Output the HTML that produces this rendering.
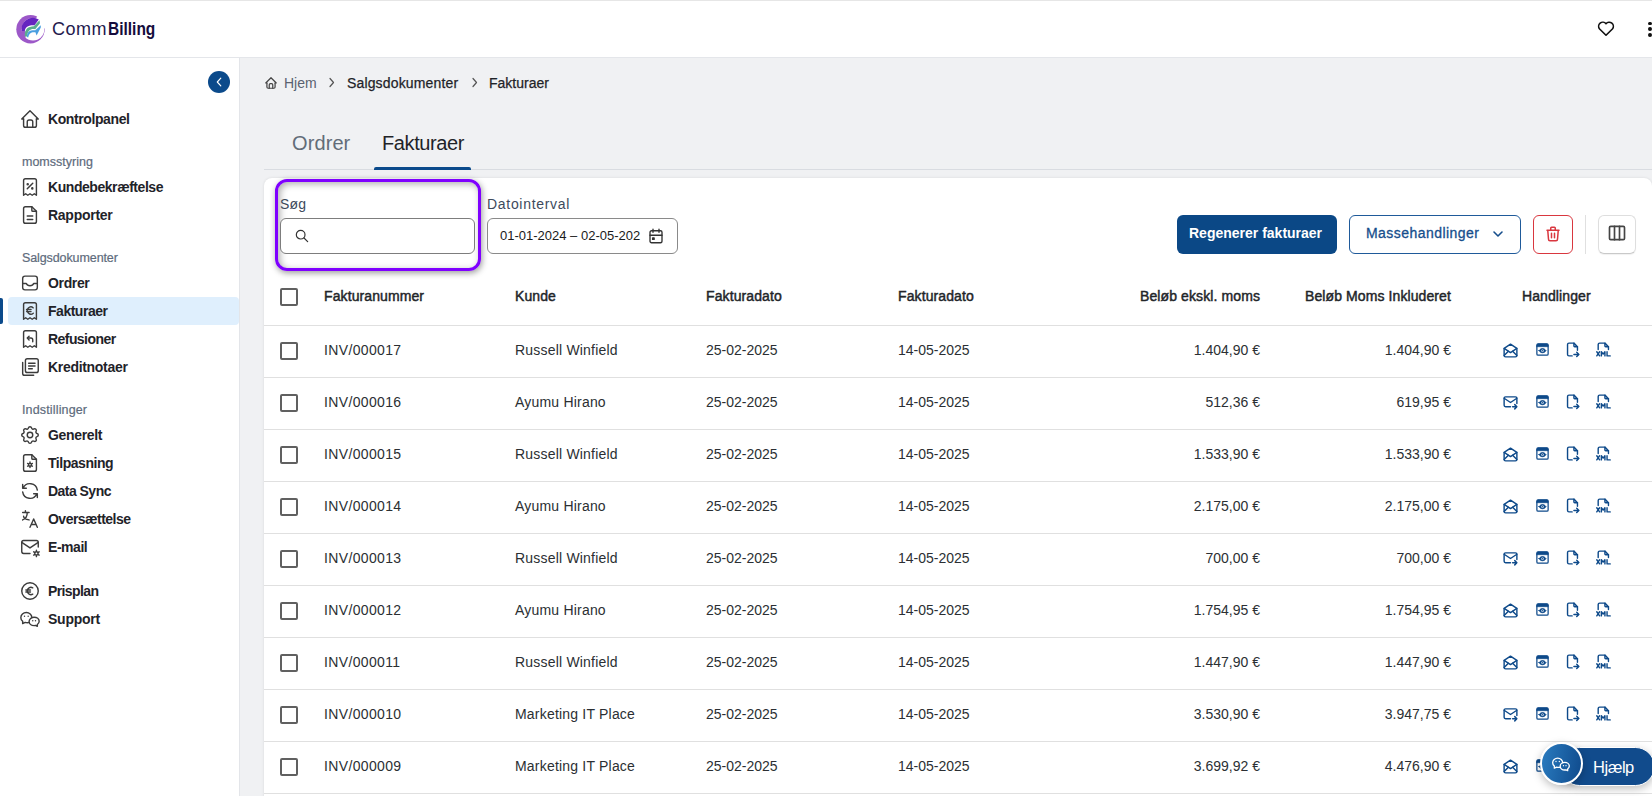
<!DOCTYPE html>
<html><head><meta charset="utf-8">
<style>
*{box-sizing:border-box;margin:0;padding:0}
html,body{width:1652px;height:796px;overflow:hidden;background:#f0f1f3;font-family:"Liberation Sans",sans-serif;color:#1f2328}
.abs{position:absolute;display:block}
.t{position:absolute;white-space:nowrap}
</style></head><body>
<div class="abs" style="left:0;top:0;width:1652px;height:58px;background:#fff;border-top:1px solid #e6e6e6;border-bottom:1px solid #e4e6ea"></div>
<svg class="abs" style="left:13px;top:12px" width="34" height="34" viewBox="0 0 34 34">
<circle cx="17.5" cy="17.2" r="14.2" fill="#9c58c8"/>
<circle cx="20" cy="17.3" r="11.3" fill="#fff"/>
<path d="M17.5 17.2 L25.4 2 L34 2 L34 16.2 Z" fill="#fff"/>
<path d="M8.5 19 L12.5 19 L12.5 26.5 L8.5 26.5 Z" fill="#9c58c8"/>
<path d="M8.8 19 A11.3 11.3 0 0 1 25.8 7.5 L21.5 13.2 C17 12.8 12.5 14 11.8 19 Z" fill="#6524c0"/>
<path d="M11.8 24.5 C11.5 17 15 14.5 20.8 14.3 L26.5 8.3 L27 11.3 L22.2 17.2 C17.5 16.5 14.6 18.5 14 24.5 Z" fill="#5bae8e"/>
<path d="M14 25 C13.8 20 16 18.2 22.3 18.3 L27.8 13.2 L27.8 15.5 L23.6 23.5 L22.4 20.2 C18 19.8 16.2 21 15.2 25.5 Z" fill="#4a9fe0"/>
</svg>
<div class="t" style="left:52px;top:18px;font-size:18px;color:#150c3c;font-weight:normal;letter-spacing:0px;line-height:22px;"><span style="font-weight:normal;letter-spacing:0.5px;color:#241a4d">Comm</span><b style="display:inline-block;transform:scaleX(0.86);transform-origin:0 0;margin-left:1px">Billing</b></div>
<svg class="abs" style="left:1597px;top:20px" width="18" height="17" viewBox="0 0 24 22" fill="none" stroke="#111" stroke-width="2.2" stroke-linecap="round" stroke-linejoin="round" ><path d="M12 20 L3.5 11.7 A5 5 0 0 1 12 4.6 A5 5 0 0 1 20.5 11.7 Z"/></svg>
<div class="abs" style="left:1648px;top:21.5px;width:3.8px;height:3.8px;border-radius:50%;background:#111"></div>
<div class="abs" style="left:1648px;top:27.200000000000003px;width:3.8px;height:3.8px;border-radius:50%;background:#111"></div>
<div class="abs" style="left:1648px;top:32.9px;width:3.8px;height:3.8px;border-radius:50%;background:#111"></div>
<div class="abs" style="left:0;top:58px;width:240px;height:738px;background:#fff;border-right:1px solid #e3e5e9"></div>
<div class="abs" style="left:208px;top:71px;width:22px;height:22px;border-radius:50%;background:#0b4a8b"></div>
<svg class="abs" style="left:214px;top:76px" width="10" height="12" viewBox="0 0 10 12" fill="none" stroke="#fff" stroke-width="1.15" stroke-linecap="round" stroke-linejoin="round" ><path d="M6.8 2.2 L3.3 6 L6.8 9.8"/></svg>
<div class="t" style="left:48px;top:109px;font-size:14px;color:#1f2329;font-weight:bold;letter-spacing:-0.4px;line-height:20px;">Kontrolpanel</div>
<svg class="abs" style="left:19px;top:108px" width="22" height="22" viewBox="0 0 24 24" fill="none" stroke="#3c3c3c" stroke-width="1.55" stroke-linecap="round" stroke-linejoin="round" ><path d="M5 12H3l9-9 9 9h-2"/><path d="M5 12v7a2 2 0 0 0 2 2h10a2 2 0 0 0 2-2v-7"/><path d="M9 21v-6a2 2 0 0 1 2-2h2a2 2 0 0 1 2 2v6"/></svg>
<div class="t" style="left:22px;top:154px;font-size:12.5px;color:#5e6b7c;font-weight:normal;letter-spacing:0px;line-height:16px;-webkit-text-stroke:0.2px #5e6b7c">momsstyring</div>
<div class="t" style="left:48px;top:177px;font-size:14px;color:#1f2329;font-weight:bold;letter-spacing:-0.444px;line-height:20px;">Kundebekræftelse</div>
<svg class="abs" style="left:19px;top:176px" width="22" height="22" viewBox="0 0 24 24" fill="none" stroke="#3c3c3c" stroke-width="1.55" stroke-linecap="round" stroke-linejoin="round" ><path d="M5 21V5a2 2 0 0 1 2-2h10a2 2 0 0 1 2 2v16l-2.3-1.6-2.3 1.6-2.4-1.6-2.4 1.6-2.3-1.6z"/><path d="M9 14l6-6"/><circle cx="9.5" cy="9" r=".6" fill="#333"/><circle cx="14.5" cy="13.5" r=".6" fill="#333"/></svg>
<div class="t" style="left:48px;top:205px;font-size:14px;color:#1f2329;font-weight:bold;letter-spacing:-0.267px;line-height:20px;">Rapporter</div>
<svg class="abs" style="left:19px;top:204px" width="22" height="22" viewBox="0 0 24 24" fill="none" stroke="#3c3c3c" stroke-width="1.55" stroke-linecap="round" stroke-linejoin="round" ><path d="M14 3v4a1 1 0 0 0 1 1h4"/><path d="M17 21H7a2 2 0 0 1-2-2V5a2 2 0 0 1 2-2h7l5 5v11a2 2 0 0 1-2 2z"/><path d="M9 13h6M9 17h6"/></svg>
<div class="t" style="left:22px;top:250px;font-size:12.5px;color:#5e6b7c;font-weight:normal;letter-spacing:-0.1px;line-height:16px;-webkit-text-stroke:0.2px #5e6b7c">Salgsdokumenter</div>
<div class="abs" style="left:8px;top:297px;width:231px;height:28px;background:#dfeffd;border-radius:4px"></div>
<div class="abs" style="left:0;top:298px;width:3px;height:26px;background:#0b4a8b;border-radius:0 2px 2px 0"></div>
<div class="t" style="left:48px;top:273px;font-size:14px;color:#1f2329;font-weight:bold;letter-spacing:-0.35px;line-height:20px;">Ordrer</div>
<svg class="abs" style="left:19px;top:272px" width="22" height="22" viewBox="0 0 24 24" fill="none" stroke="#3c3c3c" stroke-width="1.55" stroke-linecap="round" stroke-linejoin="round" ><rect x="4" y="4.5" width="16" height="15" rx="2.5"/><path d="M4 12.5h4c.6 1.6 2 2.5 4 2.5s3.4-.9 4-2.5h4"/></svg>
<div class="t" style="left:48px;top:301px;font-size:14px;color:#1f2329;font-weight:bold;letter-spacing:-0.478px;line-height:20px;">Fakturaer</div>
<svg class="abs" style="left:19px;top:300px" width="22" height="22" viewBox="0 0 24 24" fill="none" stroke="#3c3c3c" stroke-width="1.55" stroke-linecap="round" stroke-linejoin="round" ><path d="M5 21V5a2 2 0 0 1 2-2h10a2 2 0 0 1 2 2v16l-2.3-1.6-2.3 1.6-2.4-1.6-2.4 1.6-2.3-1.6z"/><path d="M15.6 8.6a3.9 3.9 0 1 0 0 5.8M8.2 10.4h5M8.2 12.6h5" stroke-width="1.45"/></svg>
<div class="t" style="left:48px;top:329px;font-size:14px;color:#1f2329;font-weight:bold;letter-spacing:-0.56px;line-height:20px;">Refusioner</div>
<svg class="abs" style="left:19px;top:328px" width="22" height="22" viewBox="0 0 24 24" fill="none" stroke="#3c3c3c" stroke-width="1.55" stroke-linecap="round" stroke-linejoin="round" ><path d="M5 21V5a2 2 0 0 1 2-2h10a2 2 0 0 1 2 2v16l-2.3-1.6-2.3 1.6-2.4-1.6-2.4 1.6-2.3-1.6z"/><path d="M15 15v-2a2 2 0 0 0-2-2H9.5"/><path d="M11 9l-2 2 2 2"/></svg>
<div class="t" style="left:48px;top:357px;font-size:14px;color:#1f2329;font-weight:bold;letter-spacing:-0.308px;line-height:20px;">Kreditnotaer</div>
<svg class="abs" style="left:19px;top:356px" width="22" height="22" viewBox="0 0 24 24" fill="none" stroke="#3c3c3c" stroke-width="1.55" stroke-linecap="round" stroke-linejoin="round" ><rect x="7" y="3" width="14" height="15" rx="2"/><path d="M4 7v12a2 2 0 0 0 2 2h10"/><path d="M10.5 8h7M10.5 11h7M10.5 14h4"/></svg>
<div class="t" style="left:22px;top:402px;font-size:12.5px;color:#5e6b7c;font-weight:normal;letter-spacing:0.15px;line-height:16px;-webkit-text-stroke:0.2px #5e6b7c">Indstillinger</div>
<div class="t" style="left:48px;top:425px;font-size:14px;color:#1f2329;font-weight:bold;letter-spacing:-0.338px;line-height:20px;">Generelt</div>
<svg class="abs" style="left:19px;top:424px" width="22" height="22" viewBox="0 0 24 24" fill="none" stroke="#3c3c3c" stroke-width="1.55" stroke-linecap="round" stroke-linejoin="round" ><path d="M10.3 4.3c.4-1.8 3-1.8 3.4 0a1.7 1.7 0 0 0 2.6 1.1c1.5-.9 3.3.8 2.4 2.4a1.7 1.7 0 0 0 1 2.6c1.8.4 1.8 3 0 3.4a1.7 1.7 0 0 0-1 2.6c.9 1.5-.8 3.3-2.4 2.4a1.7 1.7 0 0 0-2.6 1c-.4 1.8-3 1.8-3.4 0a1.7 1.7 0 0 0-2.6-1c-1.5.9-3.3-.8-2.4-2.4a1.7 1.7 0 0 0-1-2.6c-1.8-.4-1.8-3 0-3.4a1.7 1.7 0 0 0 1-2.6c-.9-1.5.8-3.3 2.4-2.4a1.7 1.7 0 0 0 2.6-1.1z"/><circle cx="12" cy="12" r="3"/></svg>
<div class="t" style="left:48px;top:453px;font-size:14px;color:#1f2329;font-weight:bold;letter-spacing:-0.47px;line-height:20px;">Tilpasning</div>
<svg class="abs" style="left:19px;top:452px" width="22" height="22" viewBox="0 0 24 24" fill="none" stroke="#3c3c3c" stroke-width="1.55" stroke-linecap="round" stroke-linejoin="round" ><path d="M14 3v4a1 1 0 0 0 1 1h4"/><path d="M17 21H7a2 2 0 0 1-2-2V5a2 2 0 0 1 2-2h7l5 5v11a2 2 0 0 1-2 2z"/><circle cx="12" cy="14" r="1.6"/><path d="M12 11v1M12 16v1M9.4 12.5l.9.5M13.7 15l.9.5M9.4 15.5l.9-.5M13.7 13l.9-.5"/></svg>
<div class="t" style="left:48px;top:481px;font-size:14px;color:#1f2329;font-weight:bold;letter-spacing:-0.533px;line-height:20px;">Data Sync</div>
<svg class="abs" style="left:19px;top:480px" width="22" height="22" viewBox="0 0 24 24" fill="none" stroke="#3c3c3c" stroke-width="1.55" stroke-linecap="round" stroke-linejoin="round" ><path d="M20 11A8.1 8.1 0 0 0 4.5 9M4 5v4h4"/><path d="M4 13a8.1 8.1 0 0 0 15.5 2m.5 4v-4h-4"/></svg>
<div class="t" style="left:48px;top:509px;font-size:14px;color:#1f2329;font-weight:bold;letter-spacing:-0.525px;line-height:20px;">Oversættelse</div>
<svg class="abs" style="left:19px;top:508px" width="22" height="22" viewBox="0 0 24 24" fill="none" stroke="#3c3c3c" stroke-width="1.55" stroke-linecap="round" stroke-linejoin="round" ><path d="M4 5h7M7 3v2M9 5c0 4-2 7-5 8M5 9c0 2 2.5 3.5 6 4"/><path d="M12 21l4-9 4 9M13.5 18h5"/></svg>
<div class="t" style="left:48px;top:537px;font-size:14px;color:#1f2329;font-weight:bold;letter-spacing:-0.45px;line-height:20px;">E-mail</div>
<svg class="abs" style="left:19px;top:536px" width="22" height="22" viewBox="0 0 24 24" fill="none" stroke="#3c3c3c" stroke-width="1.55" stroke-linecap="round" stroke-linejoin="round" ><path d="M12 19H5a2 2 0 0 1-2-2V7a2 2 0 0 1 2-2h14a2 2 0 0 1 2 2v5"/><path d="M3 7l9 6 9-6"/><circle cx="19" cy="19" r="1.8"/><path d="M19 15.5v1.2M19 21.3v1.2M22 17.2l-1 .6M17 20.2l-1 .6M16 17.2l1 .6M21 20.2l1 .6"/></svg>
<div class="t" style="left:48px;top:581px;font-size:14px;color:#1f2329;font-weight:bold;letter-spacing:-0.613px;line-height:20px;">Prisplan</div>
<svg class="abs" style="left:19px;top:580px" width="22" height="22" viewBox="0 0 24 24" fill="none" stroke="#3c3c3c" stroke-width="1.55" stroke-linecap="round" stroke-linejoin="round" ><circle cx="12" cy="12" r="9"/><path d="M15 8.5a4 4 0 0 0-6 3.5a4 4 0 0 0 6 3.5M7.5 11h5M7.5 13h5"/></svg>
<div class="t" style="left:48px;top:609px;font-size:14px;color:#1f2329;font-weight:bold;letter-spacing:-0.257px;line-height:20px;">Support</div>
<svg class="abs" style="left:19px;top:608px" width="22" height="22" viewBox="0 0 24 24" fill="none" stroke="#3c3c3c" stroke-width="1.55" stroke-linecap="round" stroke-linejoin="round" ><path d="M16.5 10c3 0 5.5 2 5.5 4.5 0 1.4-.8 2.6-2 3.5v2l-2-1c-.5.2-1 .2-1.5.2-3 0-5.5-2-5.5-4.5S13.5 10 16.5 10z"/><path d="M11.2 15.7c-.7.2-1.4.3-2.2.3-.8 0-1.5-.1-2.2-.3L4 17v-2.5C2.8 13.5 2 12.1 2 10.5 2 7.5 4.7 5 8 5s6 2.5 6 5.5"/><path d="M10 9h.01M6 9h.01M15 14h.01M18 14h.01"/></svg>
<svg class="abs" style="left:263.5px;top:75.5px" width="14" height="14" viewBox="0 0 24 24" fill="none" stroke="#444" stroke-width="2.1" stroke-linecap="round" stroke-linejoin="round" ><path d="M5 12H3l9-9 9 9h-2"/><path d="M5 12v7a2 2 0 0 0 2 2h10a2 2 0 0 0 2-2v-7"/><path d="M9 21v-6a2 2 0 0 1 2-2h2a2 2 0 0 1 2 2v6"/></svg>
<div class="t" style="left:284px;top:73px;font-size:14px;color:#5a6270;font-weight:normal;letter-spacing:0px;line-height:20px;">Hjem</div>
<svg class="abs" style="left:327px;top:77px" width="9" height="11" viewBox="0 0 8 11" fill="none" stroke="#555" stroke-width="1.2" stroke-linecap="round" stroke-linejoin="round" ><path d="M2.5 1.5L6 5.5 2.5 9.5"/></svg>
<div class="t" style="left:347px;top:73px;font-size:14px;color:#1f2328;font-weight:normal;letter-spacing:0.15px;line-height:20px;-webkit-text-stroke:0.25px #1f2328">Salgsdokumenter</div>
<svg class="abs" style="left:470px;top:77px" width="9" height="11" viewBox="0 0 8 11" fill="none" stroke="#555" stroke-width="1.2" stroke-linecap="round" stroke-linejoin="round" ><path d="M2.5 1.5L6 5.5 2.5 9.5"/></svg>
<div class="t" style="left:489px;top:73px;font-size:14px;color:#1f2328;font-weight:normal;letter-spacing:0px;line-height:20px;-webkit-text-stroke:0.25px #1f2328">Fakturaer</div>
<div class="t" style="left:292px;top:131px;font-size:20px;color:#626c78;font-weight:normal;letter-spacing:0.1px;line-height:24px;">Ordrer</div>
<div class="t" style="left:382px;top:131px;font-size:20px;color:#1f2328;font-weight:normal;letter-spacing:-0.4px;line-height:24px;">Fakturaer</div>
<div class="abs" style="left:264px;top:169px;width:1388px;height:1px;background:#d9dce1"></div>
<div class="abs" style="left:374px;top:167px;width:97px;height:3px;background:#0b4a8b;border-radius:2px 2px 0 0"></div>
<div class="abs" style="left:264px;top:178px;width:1388px;height:630px;background:#fff;border-radius:8px;box-shadow:0 0 3px rgba(0,0,0,.1)"></div>
<div class="abs" style="left:275px;top:179px;width:206px;height:92px;border:3px solid #7f00ff;border-radius:12px;box-shadow:1px 2px 6px rgba(0,0,0,.4), inset 2px 2px 7px rgba(0,0,0,.32)"></div>
<div class="t" style="left:280px;top:194px;font-size:14px;color:#3d4a5c;font-weight:normal;letter-spacing:0.2px;line-height:20px;">Søg</div>
<div class="abs" style="left:280px;top:218px;width:195px;height:36px;border:1px solid #7d7d7d;border-radius:6px;background:#fff"></div>
<svg class="abs" style="left:294px;top:228px" width="16" height="16" viewBox="0 0 24 24" fill="none" stroke="#333" stroke-width="1.8" stroke-linecap="round" stroke-linejoin="round" ><circle cx="10" cy="10" r="6.5"/><path d="M15 15l5.5 5.5"/></svg>
<div class="t" style="left:487px;top:194px;font-size:14px;color:#3d4a5c;font-weight:normal;letter-spacing:0.7px;line-height:20px;">Datointerval</div>
<div class="abs" style="left:487px;top:218px;width:191px;height:36px;border:1px solid #8a8a8a;border-radius:6px;background:#fff"></div>
<div class="t" style="left:500px;top:226px;font-size:13px;color:#1a1a1a;font-weight:normal;letter-spacing:0px;line-height:20px;">01-01-2024 – 02-05-202</div>
<svg class="abs" style="left:647px;top:227px" width="18" height="18" viewBox="0 0 24 24" fill="none" stroke="#333" stroke-width="1.8" stroke-linecap="round" stroke-linejoin="round" ><rect x="4" y="5" width="16" height="16" rx="2"/><path d="M16 3v4M8 3v4M4 11h16"/><rect x="7.5" y="14.5" width="2" height="2" fill="#333"/></svg>
<div class="abs" style="left:1177px;top:215px;width:160px;height:39px;background:#0b4886;border-radius:6px"></div>
<div class="t" style="left:1189px;top:223px;font-size:14px;color:#fff;font-weight:bold;letter-spacing:0px;line-height:20px;">Regenerer fakturaer</div>
<div class="abs" style="left:1349px;top:215px;width:172px;height:39px;border:1px solid #1f5a9a;border-radius:6px"></div>
<div class="t" style="left:1366px;top:223px;font-size:14px;color:#164e8c;font-weight:normal;letter-spacing:0.45px;line-height:20px;-webkit-text-stroke:0.3px #164e8c">Massehandlinger</div>
<svg class="abs" style="left:1492px;top:229px" width="12" height="10" viewBox="0 0 12 10" fill="none" stroke="#164e8c" stroke-width="1.6" stroke-linecap="round" stroke-linejoin="round" ><path d="M2 3l4 4 4-4"/></svg>
<div class="abs" style="left:1533px;top:215px;width:40px;height:39px;border:1px solid #d9373f;border-radius:6px"></div>
<svg class="abs" style="left:1544px;top:225px" width="18" height="18" viewBox="0 0 24 24" fill="none" stroke="#d9373f" stroke-width="2" stroke-linecap="round" stroke-linejoin="round" ><path d="M4 7h16M10 11v6M14 11v6M5 7l1 12a2 2 0 0 0 2 2h8a2 2 0 0 0 2-2l1-12M9 7V4a1 1 0 0 1 1-1h4a1 1 0 0 1 1 1v3"/></svg>
<div class="abs" style="left:1585px;top:215px;width:1px;height:39px;background:#e0e0e0"></div>
<div class="abs" style="left:1598px;top:215px;width:38px;height:39px;border:1px solid #dedede;border-bottom-color:#c9c9c9;border-radius:6px;box-shadow:0 1px 1px rgba(0,0,0,.06)"></div>
<svg class="abs" style="left:1607px;top:223px" width="20" height="20" viewBox="0 0 24 24" fill="none" stroke="#444" stroke-width="2" stroke-linecap="round" stroke-linejoin="round" ><rect x="3" y="4" width="18" height="16" rx="1.5"/><path d="M9 4v16M15 4v16"/></svg>
<div class="abs" style="left:280px;top:288px;width:18px;height:18px;border:2px solid #606060;border-radius:2px"></div>
<div class="t" style="left:324px;top:286px;font-size:14px;color:#222529;font-weight:normal;letter-spacing:0.1px;line-height:20px;-webkit-text-stroke:0.45px #222529">Fakturanummer</div>
<div class="t" style="left:515px;top:286px;font-size:14px;color:#222529;font-weight:normal;letter-spacing:0.1px;line-height:20px;-webkit-text-stroke:0.45px #222529">Kunde</div>
<div class="t" style="left:706px;top:286px;font-size:14px;color:#222529;font-weight:normal;letter-spacing:0.1px;line-height:20px;-webkit-text-stroke:0.45px #222529">Fakturadato</div>
<div class="t" style="left:898px;top:286px;font-size:14px;color:#222529;font-weight:normal;letter-spacing:0.1px;line-height:20px;-webkit-text-stroke:0.45px #222529">Fakturadato</div>
<div class="t" style="left:860px;width:400px;text-align:right;top:286px;font-size:14px;color:#222529;font-weight:normal;letter-spacing:0.1px;line-height:20px;-webkit-text-stroke:0.45px #222529">Beløb ekskl. moms</div>
<div class="t" style="left:1051px;width:400px;text-align:right;top:286px;font-size:14px;color:#222529;font-weight:normal;letter-spacing:0.1px;line-height:20px;-webkit-text-stroke:0.45px #222529">Beløb Moms Inkluderet</div>
<div class="t" style="left:1522px;top:286px;font-size:14px;color:#222529;font-weight:normal;letter-spacing:0.1px;line-height:20px;-webkit-text-stroke:0.45px #222529">Handlinger</div>
<div class="abs" style="left:264px;top:325px;width:1388px;height:1px;background:#e0e0e0"></div>
<div class="abs" style="left:280px;top:342px;width:18px;height:18px;border:2px solid #606060;border-radius:2px"></div>
<div class="t" style="left:324px;top:340px;font-size:14px;color:#2b2f33;font-weight:normal;letter-spacing:0.35px;line-height:20px;">INV/000017</div>
<div class="t" style="left:515px;top:340px;font-size:14px;color:#2b2f33;font-weight:normal;letter-spacing:0.2px;line-height:20px;">Russell Winfield</div>
<div class="t" style="left:706px;top:340px;font-size:14px;color:#2b2f33;font-weight:normal;letter-spacing:0px;line-height:20px;">25-02-2025</div>
<div class="t" style="left:898px;top:340px;font-size:14px;color:#2b2f33;font-weight:normal;letter-spacing:0px;line-height:20px;">14-05-2025</div>
<div class="t" style="left:860px;width:400px;text-align:right;top:340px;font-size:14px;color:#2b2f33;font-weight:normal;letter-spacing:0px;line-height:20px;">1.404,90 €</div>
<div class="t" style="left:1051px;width:400px;text-align:right;top:340px;font-size:14px;color:#2b2f33;font-weight:normal;letter-spacing:0px;line-height:20px;">1.404,90 €</div>
<svg class="abs" style="left:1502px;top:342px" width="17" height="17" viewBox="0 0 24 24" fill="none" stroke="#0e4a8a" stroke-width="2" stroke-linecap="round" stroke-linejoin="round" ><path d="M3 9l9 6 9-6-9-6-9 6"/><path d="M21 9v10a2 2 0 0 1-2 2H5a2 2 0 0 1-2-2V9"/><path d="M3 19l6-6M15 13l6 6"/></svg>
<svg class="abs" style="left:1534.5px;top:341.5px" width="15" height="15" viewBox="0 0 24 24" fill="none" stroke="#0e4a8a" stroke-width="2" stroke-linecap="round" stroke-linejoin="round" ><rect x="3" y="3" width="18" height="18" rx="2"/><path d="M3 5a2 2 0 0 1 2-2h14a2 2 0 0 1 2 2v2.5H3z" fill="#0e4a8a" stroke-width="1"/><path d="M6.5 13.8c1.5-2.2 3.3-3.3 5.5-3.3s4 1.1 5.5 3.3c-1.5 2.2-3.3 3.3-5.5 3.3s-4-1.1-5.5-3.3z" fill="#0e4a8a" stroke-width="1.5"/><circle cx="12" cy="13.8" r="1.9" fill="#fff" stroke="none"/><circle cx="12" cy="13.8" r="0.9" fill="#0e4a8a" stroke="none"/></svg>
<svg class="abs" style="left:1564px;top:341px" width="17" height="17" viewBox="0 0 24 24" fill="none" stroke="#0e4a8a" stroke-width="2" stroke-linecap="round" stroke-linejoin="round" ><path d="M14 3v4a1 1 0 0 0 1 1h4"/><path d="M11.5 21H7a2 2 0 0 1-2-2V5a2 2 0 0 1 2-2h7l5 5v5"/><path d="M14 19h7M18 16l3 3-3 3"/></svg>
<svg class="abs" style="left:1595px;top:341px" width="17" height="17" viewBox="0 0 24 24" fill="none" stroke="#0e4a8a" stroke-width="2" stroke-linecap="round" stroke-linejoin="round" ><path d="M14 3v4a1 1 0 0 0 1 1h4"/><path d="M4.5 12V5a2 2 0 0 1 2-2h7.5l5 5v4"/><path d="M2.5 15.2l4 5.8M6.5 15.2l-4 5.8M9 21v-5.8l2.5 3.3 2.5-3.3V21M17 15.2V21h4.5"/></svg>
<div class="abs" style="left:264px;top:377px;width:1388px;height:1px;background:#e0e0e0"></div>
<div class="abs" style="left:280px;top:394px;width:18px;height:18px;border:2px solid #606060;border-radius:2px"></div>
<div class="t" style="left:324px;top:392px;font-size:14px;color:#2b2f33;font-weight:normal;letter-spacing:0.35px;line-height:20px;">INV/000016</div>
<div class="t" style="left:515px;top:392px;font-size:14px;color:#2b2f33;font-weight:normal;letter-spacing:0.2px;line-height:20px;">Ayumu Hirano</div>
<div class="t" style="left:706px;top:392px;font-size:14px;color:#2b2f33;font-weight:normal;letter-spacing:0px;line-height:20px;">25-02-2025</div>
<div class="t" style="left:898px;top:392px;font-size:14px;color:#2b2f33;font-weight:normal;letter-spacing:0px;line-height:20px;">14-05-2025</div>
<div class="t" style="left:860px;width:400px;text-align:right;top:392px;font-size:14px;color:#2b2f33;font-weight:normal;letter-spacing:0px;line-height:20px;">512,36 €</div>
<div class="t" style="left:1051px;width:400px;text-align:right;top:392px;font-size:14px;color:#2b2f33;font-weight:normal;letter-spacing:0px;line-height:20px;">619,95 €</div>
<svg class="abs" style="left:1502px;top:394px" width="17" height="17" viewBox="0 0 24 24" fill="none" stroke="#0e4a8a" stroke-width="2" stroke-linecap="round" stroke-linejoin="round" ><path d="M12 18H5a2 2 0 0 1-2-2V6a2 2 0 0 1 2-2h14a2 2 0 0 1 2 2v7.5"/><path d="M3 6l9 6 9-6"/><path d="M15 18h6M18 15l3 3-3 3"/></svg>
<svg class="abs" style="left:1534.5px;top:393.5px" width="15" height="15" viewBox="0 0 24 24" fill="none" stroke="#0e4a8a" stroke-width="2" stroke-linecap="round" stroke-linejoin="round" ><rect x="3" y="3" width="18" height="18" rx="2"/><path d="M3 5a2 2 0 0 1 2-2h14a2 2 0 0 1 2 2v2.5H3z" fill="#0e4a8a" stroke-width="1"/><path d="M6.5 13.8c1.5-2.2 3.3-3.3 5.5-3.3s4 1.1 5.5 3.3c-1.5 2.2-3.3 3.3-5.5 3.3s-4-1.1-5.5-3.3z" fill="#0e4a8a" stroke-width="1.5"/><circle cx="12" cy="13.8" r="1.9" fill="#fff" stroke="none"/><circle cx="12" cy="13.8" r="0.9" fill="#0e4a8a" stroke="none"/></svg>
<svg class="abs" style="left:1564px;top:393px" width="17" height="17" viewBox="0 0 24 24" fill="none" stroke="#0e4a8a" stroke-width="2" stroke-linecap="round" stroke-linejoin="round" ><path d="M14 3v4a1 1 0 0 0 1 1h4"/><path d="M11.5 21H7a2 2 0 0 1-2-2V5a2 2 0 0 1 2-2h7l5 5v5"/><path d="M14 19h7M18 16l3 3-3 3"/></svg>
<svg class="abs" style="left:1595px;top:393px" width="17" height="17" viewBox="0 0 24 24" fill="none" stroke="#0e4a8a" stroke-width="2" stroke-linecap="round" stroke-linejoin="round" ><path d="M14 3v4a1 1 0 0 0 1 1h4"/><path d="M4.5 12V5a2 2 0 0 1 2-2h7.5l5 5v4"/><path d="M2.5 15.2l4 5.8M6.5 15.2l-4 5.8M9 21v-5.8l2.5 3.3 2.5-3.3V21M17 15.2V21h4.5"/></svg>
<div class="abs" style="left:264px;top:429px;width:1388px;height:1px;background:#e0e0e0"></div>
<div class="abs" style="left:280px;top:446px;width:18px;height:18px;border:2px solid #606060;border-radius:2px"></div>
<div class="t" style="left:324px;top:444px;font-size:14px;color:#2b2f33;font-weight:normal;letter-spacing:0.35px;line-height:20px;">INV/000015</div>
<div class="t" style="left:515px;top:444px;font-size:14px;color:#2b2f33;font-weight:normal;letter-spacing:0.2px;line-height:20px;">Russell Winfield</div>
<div class="t" style="left:706px;top:444px;font-size:14px;color:#2b2f33;font-weight:normal;letter-spacing:0px;line-height:20px;">25-02-2025</div>
<div class="t" style="left:898px;top:444px;font-size:14px;color:#2b2f33;font-weight:normal;letter-spacing:0px;line-height:20px;">14-05-2025</div>
<div class="t" style="left:860px;width:400px;text-align:right;top:444px;font-size:14px;color:#2b2f33;font-weight:normal;letter-spacing:0px;line-height:20px;">1.533,90 €</div>
<div class="t" style="left:1051px;width:400px;text-align:right;top:444px;font-size:14px;color:#2b2f33;font-weight:normal;letter-spacing:0px;line-height:20px;">1.533,90 €</div>
<svg class="abs" style="left:1502px;top:446px" width="17" height="17" viewBox="0 0 24 24" fill="none" stroke="#0e4a8a" stroke-width="2" stroke-linecap="round" stroke-linejoin="round" ><path d="M3 9l9 6 9-6-9-6-9 6"/><path d="M21 9v10a2 2 0 0 1-2 2H5a2 2 0 0 1-2-2V9"/><path d="M3 19l6-6M15 13l6 6"/></svg>
<svg class="abs" style="left:1534.5px;top:445.5px" width="15" height="15" viewBox="0 0 24 24" fill="none" stroke="#0e4a8a" stroke-width="2" stroke-linecap="round" stroke-linejoin="round" ><rect x="3" y="3" width="18" height="18" rx="2"/><path d="M3 5a2 2 0 0 1 2-2h14a2 2 0 0 1 2 2v2.5H3z" fill="#0e4a8a" stroke-width="1"/><path d="M6.5 13.8c1.5-2.2 3.3-3.3 5.5-3.3s4 1.1 5.5 3.3c-1.5 2.2-3.3 3.3-5.5 3.3s-4-1.1-5.5-3.3z" fill="#0e4a8a" stroke-width="1.5"/><circle cx="12" cy="13.8" r="1.9" fill="#fff" stroke="none"/><circle cx="12" cy="13.8" r="0.9" fill="#0e4a8a" stroke="none"/></svg>
<svg class="abs" style="left:1564px;top:445px" width="17" height="17" viewBox="0 0 24 24" fill="none" stroke="#0e4a8a" stroke-width="2" stroke-linecap="round" stroke-linejoin="round" ><path d="M14 3v4a1 1 0 0 0 1 1h4"/><path d="M11.5 21H7a2 2 0 0 1-2-2V5a2 2 0 0 1 2-2h7l5 5v5"/><path d="M14 19h7M18 16l3 3-3 3"/></svg>
<svg class="abs" style="left:1595px;top:445px" width="17" height="17" viewBox="0 0 24 24" fill="none" stroke="#0e4a8a" stroke-width="2" stroke-linecap="round" stroke-linejoin="round" ><path d="M14 3v4a1 1 0 0 0 1 1h4"/><path d="M4.5 12V5a2 2 0 0 1 2-2h7.5l5 5v4"/><path d="M2.5 15.2l4 5.8M6.5 15.2l-4 5.8M9 21v-5.8l2.5 3.3 2.5-3.3V21M17 15.2V21h4.5"/></svg>
<div class="abs" style="left:264px;top:481px;width:1388px;height:1px;background:#e0e0e0"></div>
<div class="abs" style="left:280px;top:498px;width:18px;height:18px;border:2px solid #606060;border-radius:2px"></div>
<div class="t" style="left:324px;top:496px;font-size:14px;color:#2b2f33;font-weight:normal;letter-spacing:0.35px;line-height:20px;">INV/000014</div>
<div class="t" style="left:515px;top:496px;font-size:14px;color:#2b2f33;font-weight:normal;letter-spacing:0.2px;line-height:20px;">Ayumu Hirano</div>
<div class="t" style="left:706px;top:496px;font-size:14px;color:#2b2f33;font-weight:normal;letter-spacing:0px;line-height:20px;">25-02-2025</div>
<div class="t" style="left:898px;top:496px;font-size:14px;color:#2b2f33;font-weight:normal;letter-spacing:0px;line-height:20px;">14-05-2025</div>
<div class="t" style="left:860px;width:400px;text-align:right;top:496px;font-size:14px;color:#2b2f33;font-weight:normal;letter-spacing:0px;line-height:20px;">2.175,00 €</div>
<div class="t" style="left:1051px;width:400px;text-align:right;top:496px;font-size:14px;color:#2b2f33;font-weight:normal;letter-spacing:0px;line-height:20px;">2.175,00 €</div>
<svg class="abs" style="left:1502px;top:498px" width="17" height="17" viewBox="0 0 24 24" fill="none" stroke="#0e4a8a" stroke-width="2" stroke-linecap="round" stroke-linejoin="round" ><path d="M3 9l9 6 9-6-9-6-9 6"/><path d="M21 9v10a2 2 0 0 1-2 2H5a2 2 0 0 1-2-2V9"/><path d="M3 19l6-6M15 13l6 6"/></svg>
<svg class="abs" style="left:1534.5px;top:497.5px" width="15" height="15" viewBox="0 0 24 24" fill="none" stroke="#0e4a8a" stroke-width="2" stroke-linecap="round" stroke-linejoin="round" ><rect x="3" y="3" width="18" height="18" rx="2"/><path d="M3 5a2 2 0 0 1 2-2h14a2 2 0 0 1 2 2v2.5H3z" fill="#0e4a8a" stroke-width="1"/><path d="M6.5 13.8c1.5-2.2 3.3-3.3 5.5-3.3s4 1.1 5.5 3.3c-1.5 2.2-3.3 3.3-5.5 3.3s-4-1.1-5.5-3.3z" fill="#0e4a8a" stroke-width="1.5"/><circle cx="12" cy="13.8" r="1.9" fill="#fff" stroke="none"/><circle cx="12" cy="13.8" r="0.9" fill="#0e4a8a" stroke="none"/></svg>
<svg class="abs" style="left:1564px;top:497px" width="17" height="17" viewBox="0 0 24 24" fill="none" stroke="#0e4a8a" stroke-width="2" stroke-linecap="round" stroke-linejoin="round" ><path d="M14 3v4a1 1 0 0 0 1 1h4"/><path d="M11.5 21H7a2 2 0 0 1-2-2V5a2 2 0 0 1 2-2h7l5 5v5"/><path d="M14 19h7M18 16l3 3-3 3"/></svg>
<svg class="abs" style="left:1595px;top:497px" width="17" height="17" viewBox="0 0 24 24" fill="none" stroke="#0e4a8a" stroke-width="2" stroke-linecap="round" stroke-linejoin="round" ><path d="M14 3v4a1 1 0 0 0 1 1h4"/><path d="M4.5 12V5a2 2 0 0 1 2-2h7.5l5 5v4"/><path d="M2.5 15.2l4 5.8M6.5 15.2l-4 5.8M9 21v-5.8l2.5 3.3 2.5-3.3V21M17 15.2V21h4.5"/></svg>
<div class="abs" style="left:264px;top:533px;width:1388px;height:1px;background:#e0e0e0"></div>
<div class="abs" style="left:280px;top:550px;width:18px;height:18px;border:2px solid #606060;border-radius:2px"></div>
<div class="t" style="left:324px;top:548px;font-size:14px;color:#2b2f33;font-weight:normal;letter-spacing:0.35px;line-height:20px;">INV/000013</div>
<div class="t" style="left:515px;top:548px;font-size:14px;color:#2b2f33;font-weight:normal;letter-spacing:0.2px;line-height:20px;">Russell Winfield</div>
<div class="t" style="left:706px;top:548px;font-size:14px;color:#2b2f33;font-weight:normal;letter-spacing:0px;line-height:20px;">25-02-2025</div>
<div class="t" style="left:898px;top:548px;font-size:14px;color:#2b2f33;font-weight:normal;letter-spacing:0px;line-height:20px;">14-05-2025</div>
<div class="t" style="left:860px;width:400px;text-align:right;top:548px;font-size:14px;color:#2b2f33;font-weight:normal;letter-spacing:0px;line-height:20px;">700,00 €</div>
<div class="t" style="left:1051px;width:400px;text-align:right;top:548px;font-size:14px;color:#2b2f33;font-weight:normal;letter-spacing:0px;line-height:20px;">700,00 €</div>
<svg class="abs" style="left:1502px;top:550px" width="17" height="17" viewBox="0 0 24 24" fill="none" stroke="#0e4a8a" stroke-width="2" stroke-linecap="round" stroke-linejoin="round" ><path d="M12 18H5a2 2 0 0 1-2-2V6a2 2 0 0 1 2-2h14a2 2 0 0 1 2 2v7.5"/><path d="M3 6l9 6 9-6"/><path d="M15 18h6M18 15l3 3-3 3"/></svg>
<svg class="abs" style="left:1534.5px;top:549.5px" width="15" height="15" viewBox="0 0 24 24" fill="none" stroke="#0e4a8a" stroke-width="2" stroke-linecap="round" stroke-linejoin="round" ><rect x="3" y="3" width="18" height="18" rx="2"/><path d="M3 5a2 2 0 0 1 2-2h14a2 2 0 0 1 2 2v2.5H3z" fill="#0e4a8a" stroke-width="1"/><path d="M6.5 13.8c1.5-2.2 3.3-3.3 5.5-3.3s4 1.1 5.5 3.3c-1.5 2.2-3.3 3.3-5.5 3.3s-4-1.1-5.5-3.3z" fill="#0e4a8a" stroke-width="1.5"/><circle cx="12" cy="13.8" r="1.9" fill="#fff" stroke="none"/><circle cx="12" cy="13.8" r="0.9" fill="#0e4a8a" stroke="none"/></svg>
<svg class="abs" style="left:1564px;top:549px" width="17" height="17" viewBox="0 0 24 24" fill="none" stroke="#0e4a8a" stroke-width="2" stroke-linecap="round" stroke-linejoin="round" ><path d="M14 3v4a1 1 0 0 0 1 1h4"/><path d="M11.5 21H7a2 2 0 0 1-2-2V5a2 2 0 0 1 2-2h7l5 5v5"/><path d="M14 19h7M18 16l3 3-3 3"/></svg>
<svg class="abs" style="left:1595px;top:549px" width="17" height="17" viewBox="0 0 24 24" fill="none" stroke="#0e4a8a" stroke-width="2" stroke-linecap="round" stroke-linejoin="round" ><path d="M14 3v4a1 1 0 0 0 1 1h4"/><path d="M4.5 12V5a2 2 0 0 1 2-2h7.5l5 5v4"/><path d="M2.5 15.2l4 5.8M6.5 15.2l-4 5.8M9 21v-5.8l2.5 3.3 2.5-3.3V21M17 15.2V21h4.5"/></svg>
<div class="abs" style="left:264px;top:585px;width:1388px;height:1px;background:#e0e0e0"></div>
<div class="abs" style="left:280px;top:602px;width:18px;height:18px;border:2px solid #606060;border-radius:2px"></div>
<div class="t" style="left:324px;top:600px;font-size:14px;color:#2b2f33;font-weight:normal;letter-spacing:0.35px;line-height:20px;">INV/000012</div>
<div class="t" style="left:515px;top:600px;font-size:14px;color:#2b2f33;font-weight:normal;letter-spacing:0.2px;line-height:20px;">Ayumu Hirano</div>
<div class="t" style="left:706px;top:600px;font-size:14px;color:#2b2f33;font-weight:normal;letter-spacing:0px;line-height:20px;">25-02-2025</div>
<div class="t" style="left:898px;top:600px;font-size:14px;color:#2b2f33;font-weight:normal;letter-spacing:0px;line-height:20px;">14-05-2025</div>
<div class="t" style="left:860px;width:400px;text-align:right;top:600px;font-size:14px;color:#2b2f33;font-weight:normal;letter-spacing:0px;line-height:20px;">1.754,95 €</div>
<div class="t" style="left:1051px;width:400px;text-align:right;top:600px;font-size:14px;color:#2b2f33;font-weight:normal;letter-spacing:0px;line-height:20px;">1.754,95 €</div>
<svg class="abs" style="left:1502px;top:602px" width="17" height="17" viewBox="0 0 24 24" fill="none" stroke="#0e4a8a" stroke-width="2" stroke-linecap="round" stroke-linejoin="round" ><path d="M3 9l9 6 9-6-9-6-9 6"/><path d="M21 9v10a2 2 0 0 1-2 2H5a2 2 0 0 1-2-2V9"/><path d="M3 19l6-6M15 13l6 6"/></svg>
<svg class="abs" style="left:1534.5px;top:601.5px" width="15" height="15" viewBox="0 0 24 24" fill="none" stroke="#0e4a8a" stroke-width="2" stroke-linecap="round" stroke-linejoin="round" ><rect x="3" y="3" width="18" height="18" rx="2"/><path d="M3 5a2 2 0 0 1 2-2h14a2 2 0 0 1 2 2v2.5H3z" fill="#0e4a8a" stroke-width="1"/><path d="M6.5 13.8c1.5-2.2 3.3-3.3 5.5-3.3s4 1.1 5.5 3.3c-1.5 2.2-3.3 3.3-5.5 3.3s-4-1.1-5.5-3.3z" fill="#0e4a8a" stroke-width="1.5"/><circle cx="12" cy="13.8" r="1.9" fill="#fff" stroke="none"/><circle cx="12" cy="13.8" r="0.9" fill="#0e4a8a" stroke="none"/></svg>
<svg class="abs" style="left:1564px;top:601px" width="17" height="17" viewBox="0 0 24 24" fill="none" stroke="#0e4a8a" stroke-width="2" stroke-linecap="round" stroke-linejoin="round" ><path d="M14 3v4a1 1 0 0 0 1 1h4"/><path d="M11.5 21H7a2 2 0 0 1-2-2V5a2 2 0 0 1 2-2h7l5 5v5"/><path d="M14 19h7M18 16l3 3-3 3"/></svg>
<svg class="abs" style="left:1595px;top:601px" width="17" height="17" viewBox="0 0 24 24" fill="none" stroke="#0e4a8a" stroke-width="2" stroke-linecap="round" stroke-linejoin="round" ><path d="M14 3v4a1 1 0 0 0 1 1h4"/><path d="M4.5 12V5a2 2 0 0 1 2-2h7.5l5 5v4"/><path d="M2.5 15.2l4 5.8M6.5 15.2l-4 5.8M9 21v-5.8l2.5 3.3 2.5-3.3V21M17 15.2V21h4.5"/></svg>
<div class="abs" style="left:264px;top:637px;width:1388px;height:1px;background:#e0e0e0"></div>
<div class="abs" style="left:280px;top:654px;width:18px;height:18px;border:2px solid #606060;border-radius:2px"></div>
<div class="t" style="left:324px;top:652px;font-size:14px;color:#2b2f33;font-weight:normal;letter-spacing:0.35px;line-height:20px;">INV/000011</div>
<div class="t" style="left:515px;top:652px;font-size:14px;color:#2b2f33;font-weight:normal;letter-spacing:0.2px;line-height:20px;">Russell Winfield</div>
<div class="t" style="left:706px;top:652px;font-size:14px;color:#2b2f33;font-weight:normal;letter-spacing:0px;line-height:20px;">25-02-2025</div>
<div class="t" style="left:898px;top:652px;font-size:14px;color:#2b2f33;font-weight:normal;letter-spacing:0px;line-height:20px;">14-05-2025</div>
<div class="t" style="left:860px;width:400px;text-align:right;top:652px;font-size:14px;color:#2b2f33;font-weight:normal;letter-spacing:0px;line-height:20px;">1.447,90 €</div>
<div class="t" style="left:1051px;width:400px;text-align:right;top:652px;font-size:14px;color:#2b2f33;font-weight:normal;letter-spacing:0px;line-height:20px;">1.447,90 €</div>
<svg class="abs" style="left:1502px;top:654px" width="17" height="17" viewBox="0 0 24 24" fill="none" stroke="#0e4a8a" stroke-width="2" stroke-linecap="round" stroke-linejoin="round" ><path d="M3 9l9 6 9-6-9-6-9 6"/><path d="M21 9v10a2 2 0 0 1-2 2H5a2 2 0 0 1-2-2V9"/><path d="M3 19l6-6M15 13l6 6"/></svg>
<svg class="abs" style="left:1534.5px;top:653.5px" width="15" height="15" viewBox="0 0 24 24" fill="none" stroke="#0e4a8a" stroke-width="2" stroke-linecap="round" stroke-linejoin="round" ><rect x="3" y="3" width="18" height="18" rx="2"/><path d="M3 5a2 2 0 0 1 2-2h14a2 2 0 0 1 2 2v2.5H3z" fill="#0e4a8a" stroke-width="1"/><path d="M6.5 13.8c1.5-2.2 3.3-3.3 5.5-3.3s4 1.1 5.5 3.3c-1.5 2.2-3.3 3.3-5.5 3.3s-4-1.1-5.5-3.3z" fill="#0e4a8a" stroke-width="1.5"/><circle cx="12" cy="13.8" r="1.9" fill="#fff" stroke="none"/><circle cx="12" cy="13.8" r="0.9" fill="#0e4a8a" stroke="none"/></svg>
<svg class="abs" style="left:1564px;top:653px" width="17" height="17" viewBox="0 0 24 24" fill="none" stroke="#0e4a8a" stroke-width="2" stroke-linecap="round" stroke-linejoin="round" ><path d="M14 3v4a1 1 0 0 0 1 1h4"/><path d="M11.5 21H7a2 2 0 0 1-2-2V5a2 2 0 0 1 2-2h7l5 5v5"/><path d="M14 19h7M18 16l3 3-3 3"/></svg>
<svg class="abs" style="left:1595px;top:653px" width="17" height="17" viewBox="0 0 24 24" fill="none" stroke="#0e4a8a" stroke-width="2" stroke-linecap="round" stroke-linejoin="round" ><path d="M14 3v4a1 1 0 0 0 1 1h4"/><path d="M4.5 12V5a2 2 0 0 1 2-2h7.5l5 5v4"/><path d="M2.5 15.2l4 5.8M6.5 15.2l-4 5.8M9 21v-5.8l2.5 3.3 2.5-3.3V21M17 15.2V21h4.5"/></svg>
<div class="abs" style="left:264px;top:689px;width:1388px;height:1px;background:#e0e0e0"></div>
<div class="abs" style="left:280px;top:706px;width:18px;height:18px;border:2px solid #606060;border-radius:2px"></div>
<div class="t" style="left:324px;top:704px;font-size:14px;color:#2b2f33;font-weight:normal;letter-spacing:0.35px;line-height:20px;">INV/000010</div>
<div class="t" style="left:515px;top:704px;font-size:14px;color:#2b2f33;font-weight:normal;letter-spacing:0.2px;line-height:20px;">Marketing IT Place</div>
<div class="t" style="left:706px;top:704px;font-size:14px;color:#2b2f33;font-weight:normal;letter-spacing:0px;line-height:20px;">25-02-2025</div>
<div class="t" style="left:898px;top:704px;font-size:14px;color:#2b2f33;font-weight:normal;letter-spacing:0px;line-height:20px;">14-05-2025</div>
<div class="t" style="left:860px;width:400px;text-align:right;top:704px;font-size:14px;color:#2b2f33;font-weight:normal;letter-spacing:0px;line-height:20px;">3.530,90 €</div>
<div class="t" style="left:1051px;width:400px;text-align:right;top:704px;font-size:14px;color:#2b2f33;font-weight:normal;letter-spacing:0px;line-height:20px;">3.947,75 €</div>
<svg class="abs" style="left:1502px;top:706px" width="17" height="17" viewBox="0 0 24 24" fill="none" stroke="#0e4a8a" stroke-width="2" stroke-linecap="round" stroke-linejoin="round" ><path d="M12 18H5a2 2 0 0 1-2-2V6a2 2 0 0 1 2-2h14a2 2 0 0 1 2 2v7.5"/><path d="M3 6l9 6 9-6"/><path d="M15 18h6M18 15l3 3-3 3"/></svg>
<svg class="abs" style="left:1534.5px;top:705.5px" width="15" height="15" viewBox="0 0 24 24" fill="none" stroke="#0e4a8a" stroke-width="2" stroke-linecap="round" stroke-linejoin="round" ><rect x="3" y="3" width="18" height="18" rx="2"/><path d="M3 5a2 2 0 0 1 2-2h14a2 2 0 0 1 2 2v2.5H3z" fill="#0e4a8a" stroke-width="1"/><path d="M6.5 13.8c1.5-2.2 3.3-3.3 5.5-3.3s4 1.1 5.5 3.3c-1.5 2.2-3.3 3.3-5.5 3.3s-4-1.1-5.5-3.3z" fill="#0e4a8a" stroke-width="1.5"/><circle cx="12" cy="13.8" r="1.9" fill="#fff" stroke="none"/><circle cx="12" cy="13.8" r="0.9" fill="#0e4a8a" stroke="none"/></svg>
<svg class="abs" style="left:1564px;top:705px" width="17" height="17" viewBox="0 0 24 24" fill="none" stroke="#0e4a8a" stroke-width="2" stroke-linecap="round" stroke-linejoin="round" ><path d="M14 3v4a1 1 0 0 0 1 1h4"/><path d="M11.5 21H7a2 2 0 0 1-2-2V5a2 2 0 0 1 2-2h7l5 5v5"/><path d="M14 19h7M18 16l3 3-3 3"/></svg>
<svg class="abs" style="left:1595px;top:705px" width="17" height="17" viewBox="0 0 24 24" fill="none" stroke="#0e4a8a" stroke-width="2" stroke-linecap="round" stroke-linejoin="round" ><path d="M14 3v4a1 1 0 0 0 1 1h4"/><path d="M4.5 12V5a2 2 0 0 1 2-2h7.5l5 5v4"/><path d="M2.5 15.2l4 5.8M6.5 15.2l-4 5.8M9 21v-5.8l2.5 3.3 2.5-3.3V21M17 15.2V21h4.5"/></svg>
<div class="abs" style="left:264px;top:741px;width:1388px;height:1px;background:#e0e0e0"></div>
<div class="abs" style="left:280px;top:758px;width:18px;height:18px;border:2px solid #606060;border-radius:2px"></div>
<div class="t" style="left:324px;top:756px;font-size:14px;color:#2b2f33;font-weight:normal;letter-spacing:0.35px;line-height:20px;">INV/000009</div>
<div class="t" style="left:515px;top:756px;font-size:14px;color:#2b2f33;font-weight:normal;letter-spacing:0.2px;line-height:20px;">Marketing IT Place</div>
<div class="t" style="left:706px;top:756px;font-size:14px;color:#2b2f33;font-weight:normal;letter-spacing:0px;line-height:20px;">25-02-2025</div>
<div class="t" style="left:898px;top:756px;font-size:14px;color:#2b2f33;font-weight:normal;letter-spacing:0px;line-height:20px;">14-05-2025</div>
<div class="t" style="left:860px;width:400px;text-align:right;top:756px;font-size:14px;color:#2b2f33;font-weight:normal;letter-spacing:0px;line-height:20px;">3.699,92 €</div>
<div class="t" style="left:1051px;width:400px;text-align:right;top:756px;font-size:14px;color:#2b2f33;font-weight:normal;letter-spacing:0px;line-height:20px;">4.476,90 €</div>
<svg class="abs" style="left:1502px;top:758px" width="17" height="17" viewBox="0 0 24 24" fill="none" stroke="#0e4a8a" stroke-width="2" stroke-linecap="round" stroke-linejoin="round" ><path d="M3 9l9 6 9-6-9-6-9 6"/><path d="M21 9v10a2 2 0 0 1-2 2H5a2 2 0 0 1-2-2V9"/><path d="M3 19l6-6M15 13l6 6"/></svg>
<svg class="abs" style="left:1534.5px;top:757.5px" width="15" height="15" viewBox="0 0 24 24" fill="none" stroke="#0e4a8a" stroke-width="2" stroke-linecap="round" stroke-linejoin="round" ><rect x="3" y="3" width="18" height="18" rx="2"/><path d="M3 5a2 2 0 0 1 2-2h14a2 2 0 0 1 2 2v2.5H3z" fill="#0e4a8a" stroke-width="1"/><path d="M6.5 13.8c1.5-2.2 3.3-3.3 5.5-3.3s4 1.1 5.5 3.3c-1.5 2.2-3.3 3.3-5.5 3.3s-4-1.1-5.5-3.3z" fill="#0e4a8a" stroke-width="1.5"/><circle cx="12" cy="13.8" r="1.9" fill="#fff" stroke="none"/><circle cx="12" cy="13.8" r="0.9" fill="#0e4a8a" stroke="none"/></svg>
<svg class="abs" style="left:1564px;top:757px" width="17" height="17" viewBox="0 0 24 24" fill="none" stroke="#0e4a8a" stroke-width="2" stroke-linecap="round" stroke-linejoin="round" ><path d="M14 3v4a1 1 0 0 0 1 1h4"/><path d="M11.5 21H7a2 2 0 0 1-2-2V5a2 2 0 0 1 2-2h7l5 5v5"/><path d="M14 19h7M18 16l3 3-3 3"/></svg>
<svg class="abs" style="left:1595px;top:757px" width="17" height="17" viewBox="0 0 24 24" fill="none" stroke="#0e4a8a" stroke-width="2" stroke-linecap="round" stroke-linejoin="round" ><path d="M14 3v4a1 1 0 0 0 1 1h4"/><path d="M4.5 12V5a2 2 0 0 1 2-2h7.5l5 5v4"/><path d="M2.5 15.2l4 5.8M6.5 15.2l-4 5.8M9 21v-5.8l2.5 3.3 2.5-3.3V21M17 15.2V21h4.5"/></svg>
<div class="abs" style="left:264px;top:793px;width:1388px;height:1px;background:#e0e0e0"></div>
<div class="abs" style="left:1560px;top:747px;width:95px;height:39px;border-radius:20px;background:#114b8c;border:1px solid #fff;box-shadow:0 3px 8px rgba(0,0,0,.25)"></div>
<div class="t" style="left:1593px;top:756px;font-size:16.5px;color:#fff;font-weight:normal;letter-spacing:-0.45px;line-height:22px;">Hjælp</div>
<div class="abs" style="left:1539.5px;top:742px;width:43px;height:43px;border-radius:50%;background:linear-gradient(100deg,#2a7cc0,#0f4a8c);border:2px solid #fff;box-shadow:0 3px 8px rgba(0,0,0,.25)"></div>
<svg class="abs" style="left:1551px;top:754px" width="20" height="20" viewBox="0 0 24 24" fill="none" stroke="#fff" stroke-width="1.6" stroke-linecap="round" stroke-linejoin="round" ><path d="M16.5 10c3 0 5.5 2 5.5 4.5 0 1.4-.8 2.6-2 3.5v2l-2-1c-.5.2-1 .2-1.5.2-3 0-5.5-2-5.5-4.5S13.5 10 16.5 10z"/><path d="M11.2 15.7c-.7.2-1.4.3-2.2.3-.8 0-1.5-.1-2.2-.3L4 17v-2.5C2.8 13.5 2 12.1 2 10.5 2 7.5 4.7 5 8 5s6 2.5 6 5.5"/><path d="M10 9h.01M6 9h.01M15 14h.01M18 14h.01"/></svg>
</body></html>
